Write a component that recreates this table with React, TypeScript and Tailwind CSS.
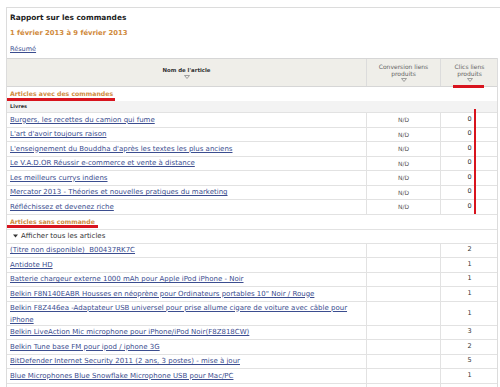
import React from "react";

type Row = { title: string; conv: string; clics: string; lines?: string[] };

const withOrders: Row[] = [
  { title: "Burgers, les recettes du camion qui fume", conv: "N/D", clics: "0" },
  { title: "L'art d'avoir toujours raison", conv: "N/D", clics: "0" },
  { title: "L'enseignement du Bouddha d'après les textes les plus anciens", conv: "N/D", clics: "0" },
  { title: "Le V.A.D.OR Réussir e-commerce et vente à distance", conv: "N/D", clics: "0" },
  { title: "Les meilleurs currys indiens", conv: "N/D", clics: "0" },
  { title: "Mercator 2013 - Théories et nouvelles pratiques du marketing", conv: "N/D", clics: "0" },
  { title: "Réfléchissez et devenez riche", conv: "N/D", clics: "0" },
];

const withoutOrders: Row[] = [
  { title: "(Titre non disponible)\u00a0 B00437RK7C", conv: "", clics: "2" },
  { title: "Antidote HD", conv: "", clics: "1" },
  { title: "Batterie chargeur externe 1000 mAh pour Apple iPod iPhone - Noir", conv: "", clics: "1" },
  { title: "Belkin F8N140EABR Housses en néoprène pour Ordinateurs portables 10\" Noir / Rouge", conv: "", clics: "1" },
  {
    title: "",
    lines: [
      "Belkin F8Z446ea -Adaptateur USB universel pour prise allume cigare de voiture avec câble pour",
      "iPhone",
    ],
    conv: "",
    clics: "1",
  },
  { title: "Belkin LiveAction Mic microphone pour iPhone/iPod Noir(F8Z818CW)", conv: "", clics: "3" },
  { title: "Belkin Tune base FM pour ipod / iphone 3G", conv: "", clics: "2" },
  { title: "BitDefender Internet Security 2011 (2 ans, 3 postes) - mise à jour", conv: "", clics: "5" },
  { title: "Blue Microphones Blue Snowflake Microphone USB pour Mac/PC", conv: "", clics: "1" },
];

const Tri = () => (
  <svg width="6" height="4" viewBox="0 0 6 4" className="mt-[1px]">
    <path d="M0.5 0.5 H5.5 L3 3.5 Z" fill="none" stroke="#8a8a8a" strokeWidth="0.8" />
  </svg>
);

const DataRow = ({ row }: { row: Row }) => {
  const tall = !!row.lines;
  return (
    <div
      className={`grid grid-cols-[360px_74px_57px] border-b border-[#e2e2e2] ${
        tall ? "h-[24px]" : "h-[14.5px]"
      }`}
    >
      <div className="border-r border-[#e2e2e2] pl-[3px] flex items-center">
        {row.lines ? (
          <div className="text-[7px] leading-[12px] text-[#3b4d8f] underline">
            {row.lines[0]}
            <br />
            {row.lines[1]}
          </div>
        ) : (
          <a className="text-[7px] text-[#3b4d8f] underline whitespace-nowrap">{row.title}</a>
        )}
      </div>
      <div className="border-r border-[#e2e2e2] flex items-center justify-center text-[6px] text-[#555]">
        {row.conv}
      </div>
      <div className="flex items-center justify-center text-[6.5px] text-[#333]">{row.clics}</div>
    </div>
  );
};

export default function App() {
  return (
    <div className="w-[500px] h-[387px] overflow-hidden bg-white font-['DejaVu_Sans',sans-serif] text-[#333]">
      <div className="ml-[6px] mt-[7px] border-l border-t border-[#dcdcdc]">
        <div className="pl-[3px]">
          <div className="h-[19px] flex items-center text-[7.4px] font-bold text-[#222]">
            Rapport sur les commandes
          </div>
          <div className="h-[13px] flex items-center text-[6.8px] font-bold text-[#d08a3c]">
            1 février 2013 à 9 février 2013
          </div>
          <div className="h-[18px] pt-[2px] flex items-center text-[6.5px]">
            <a className="text-[#3b4d8f] underline">Résumé</a>
          </div>
        </div>

        <div className="relative w-[491px] border-r border-[#dcdcdc]">
          {/* header */}
          <div className="grid grid-cols-[360px_74px_57px] h-[29px] border-t border-b border-[#d6d6d6] bg-[#efeee9]">
            <div className="border-r border-[#dcdcdc] flex flex-col items-center justify-center text-[5.4px] font-bold text-[#333] leading-[7px]">
              <span>Nom de l'article</span>
              <Tri />
            </div>
            <div className="border-r border-[#dcdcdc] flex flex-col items-center justify-center text-[6px] text-[#666] leading-[7px] text-center">
              <span>Conversion liens</span>
              <span>produits</span>
              <Tri />
            </div>
            <div className="flex flex-col items-center justify-center text-[6px] text-[#666] leading-[7px] text-center">
              <span>Clics liens</span>
              <span>produits</span>
              <Tri />
            </div>
          </div>

          {/* with orders */}
          <div className="h-[14px] pl-[3px] flex items-center text-[6.2px] font-bold text-[#cf8a40]">
            Articles avec des commandes
          </div>
          <div className="h-[12px] pl-[3px] flex items-center bg-[#f3f3f3] border-b border-[#e2e2e2] text-[5px] font-bold text-[#333]">
            Livres
          </div>
          {withOrders.map((r) => (
            <DataRow key={r.title} row={r} />
          ))}

          {/* without orders */}
          <div className="h-[15px] pl-[3px] flex items-center border-b border-[#e2e2e2] text-[6.2px] font-bold text-[#cf8a40]">
            Articles sans commande
          </div>
          <div className="h-[14px] pl-[6px] flex items-center gap-[3px] border-b border-[#e2e2e2] text-[7px] text-[#333]">
            <svg width="5" height="4" viewBox="0 0 5 4">
              <path d="M0 0.5 H5 L2.5 3.5 Z" fill="#333" />
            </svg>
            <span>Afficher tous les articles</span>
          </div>
          {withoutOrders.map((r, i) => (
            <DataRow key={i} row={r} />
          ))}
          <div className="grid grid-cols-[360px_74px_57px] h-[14.5px]">
            <div className="border-r border-[#e2e2e2]" />
            <div className="border-r border-[#e2e2e2]" />
            <div />
          </div>

          {/* annotation marks */}
          <div className="absolute left-0 top-[40px] w-[108px] h-[3px] bg-[#d8141e]" />
          <div className="absolute left-[446px] top-[27px] w-[31px] h-[3px] bg-[#d8141e]" />
          <div className="absolute left-[467px] top-[51px] w-[2px] h-[105px] bg-[#d8141e]" />
          <div className="absolute left-0 top-[166.5px] w-[91px] h-[3px] bg-[#d8141e]" />
        </div>
      </div>
    </div>
  );
}
